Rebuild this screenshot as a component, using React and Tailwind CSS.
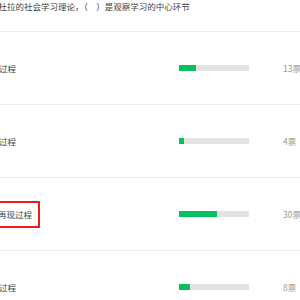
import React from 'react';

const options = [
    { label: '注意过程', votes: 13, pct: 24 },
    { label: '保持过程', votes: 4, pct: 7 },
    { label: '再现过程', votes: 30, pct: 54, marked: true },
    { label: '动机过程', votes: 8, pct: 16 },
];

const OptionRow = ({ label, votes, pct, marked }) => (
    <div className="flex items-center h-[73px] border-t border-[#ededed]">
        <div className="w-[197px] flex items-center">
            {marked ? (
                <div className="ml-[8px] h-[27px] px-[6px] flex items-center border-2 border-[#f01c1c]">
                    <span className="text-[#444]">{label}</span>
                </div>
            ) : (
                <span className="text-[#444]">{label}</span>
            )}
        </div>
        <div className="w-[70px] h-[6px] bg-[#e3e3e3]">
            <div className="h-full bg-[#07c160]" style={{ width: `${pct}%` }} />
        </div>
        <div className="ml-[34px] text-[#999] whitespace-nowrap">{votes}票</div>
    </div>
);

export default function App() {
    return (
        <div
            className="w-[300px] h-[300px] overflow-hidden bg-white text-[8.5px] leading-[10px]"
            style={{ fontFamily: '"Noto Sans CJK SC", "Noto Sans", sans-serif' }}
        >
            <div className="ml-[-18px] w-[340px]">
                <div className="h-[31px] pt-[1px] text-[#444] whitespace-nowrap">
                    <span className="ml-[8px]">班杜拉的社会学习理论，（　）是观察学习的中心环节</span>
                </div>
                {options.map((o) => (
                    <OptionRow key={o.label} {...o} />
                ))}
            </div>
        </div>
    );
}
